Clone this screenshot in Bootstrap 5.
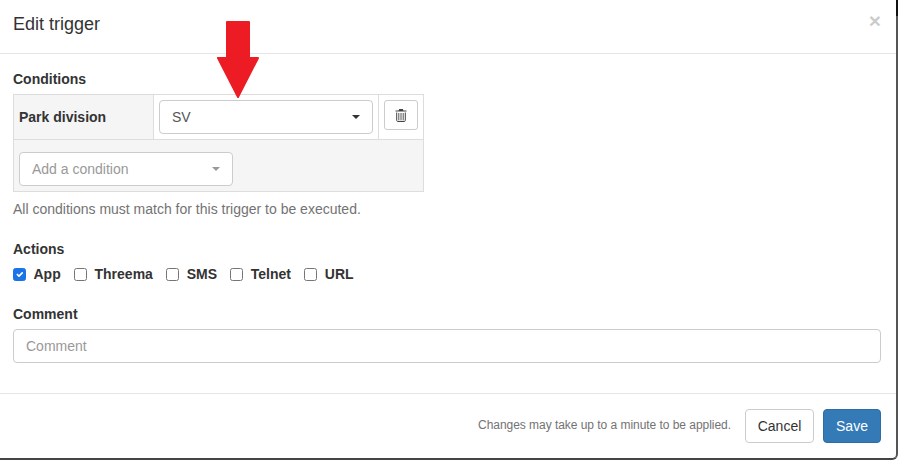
<!DOCTYPE html>
<html lang="en">
<head>
<meta charset="utf-8">
<title>Edit trigger</title>
<link href="https://cdn.jsdelivr.net/npm/bootstrap@5.3.0/dist/css/bootstrap.min.css" rel="stylesheet">
<style>
html, body { height: 460px; overflow: hidden; background: #fff; }
body { font-family: "Liberation Sans", Arial, sans-serif; font-size: 14px; line-height: 20px; color: #333; }
.dlg { width: 898px; height: 460px; background: #fff; border: 0; border-right: 2px solid #555; border-bottom: 2px solid #444; border-radius: 0 0 6px 0; }
.dlg-head { height: 54px; padding: 0 15px 0 13px; border-bottom: 1px solid #e5e5e5; }
.dlg-title { font-size: 18px; line-height: 20px; margin: 0 0 5px; font-weight: 400; color: #333; }
.dlg-x { font-size: 21px; font-weight: 700; line-height: 1; color: #000; opacity: .2; border: 0; background: none; padding: 0; margin: 0 0 12px 0; }
.dlg-body { height: 339px; padding: 15px 15px 0 13px; }
.sec-label { font-weight: 700; line-height: 20px; margin: 0 0 5px; display: block; }
.cond-table { width: 411px; border-collapse: collapse; background: #f5f5f5; margin: 0; }
.cond-table td { border: 1px solid #ddd; padding: 5px; vertical-align: top; }
.cond-name { width: 140px; font-weight: 700; line-height: 34px; padding-top: 5px !important; }
.cond-val { background: #fff; width: 225px; }
.cond-del { background: #fff; }
.sel-box { width: 214px; height: 34px; border: 1px solid #ccc; border-radius: 4px; background: #fff; padding: 0 12px; color: #555; }
.sel-caret { width: 0; height: 0; border-left: 4px solid transparent; border-right: 4px solid transparent; border-top: 4px solid #333; }
.sel-muted { color: #999; margin-top: 7px; margin-bottom: 0; }
.sel-muted .sel-caret { border-top-color: #999; }
.add-cell { height: 52px; }
.del-btn { width: 34px; height: 30px; padding: 0 0 1px; border: 1px solid #ccc; border-radius: 3px; background: #fff; line-height: 1; color: #333; }
.help-line { color: #737373; margin: 7px 0 0; line-height: 20px; }
.actions-block { margin-top: 20px; }
.check-row { height: 20px; margin-top: 0; }
.check-item { font-weight: 700; margin-right: 13.3px; }
.check-item .form-check-input { width: 13px; height: 13px; margin: 0 7.5px 0 0; border: 1px solid #767676; border-radius: 2.5px; flex: none; }
.check-item .form-check-input:checked { background-color: #1a73e8; border-color: #1a73e8; }
.comment-block { margin-top: 20px; }
.comment-input { height: 34px; width: 868px; border: 1px solid #ccc; border-radius: 4px; padding: 6px 12px; font-size: 14px; line-height: 20px; color: #555; }
.comment-input::placeholder { color: #999; opacity: 1; }
.dlg-foot { height: 65px; padding: 15px 15px 0 13px; border-top: 1px solid #e5e5e5; }
.foot-note { font-size: 12px; color: #737373; margin-right: 14px; margin-top: 6px; letter-spacing: -.04px; }
.btn-cancel { width: 69px; height: 34px; padding: 0; font-size: 14px; color: #333; background: #fff; border: 1px solid #ccc; border-radius: 4px; margin-right: 9px; }
.btn-save { width: 58px; height: 34px; padding: 0; font-size: 14px; color: #fff; background: #337ab7; border: 1px solid #2e6da4; border-radius: 4px; }
.red-arrow { position: absolute; left: 216px; top: 20px; width: 44px; height: 80px; pointer-events: none; }
.corner-strip { position: absolute; right: -2px; top: 0; width: 2px; height: 16px; background: #111; }
</style>
</head>
<body>
<div class="dlg position-relative">
  <span class="corner-strip"></span>
  <div class="dlg-head d-flex align-items-center justify-content-between">
    <h4 class="dlg-title">Edit trigger</h4>
    <button type="button" class="dlg-x" aria-label="Close">×</button>
  </div>
  <div class="dlg-body">
    <label class="sec-label">Conditions</label>
    <table class="cond-table">
      <tr>
        <td class="cond-name">Park division</td>
        <td class="cond-val">
          <div class="sel-box d-flex align-items-center justify-content-between"><span>SV</span><span class="sel-caret"></span></div>
        </td>
        <td class="cond-del">
          <button type="button" class="del-btn d-flex align-items-center justify-content-center" aria-label="Delete">
            <svg width="12" height="14" viewBox="0 0 12 14" aria-hidden="true">
              <path d="M4.2 1h3.6l.6 1.4H11.5v1H.5v-1H3.6z" fill="#444"/>
              <path d="M1.7 4.5V12.4c0 .6.4 1.1 1 1.1h6.6c.6 0 1-.5 1-1.1V4.5" fill="none" stroke="#444" stroke-width="1"/>
              <path d="M3.8 5v7.4M6 5v7.4M8.2 5v7.4" fill="none" stroke="#555" stroke-width="1"/>
            </svg>
          </button>
        </td>
      </tr>
      <tr>
        <td colspan="3" class="add-cell">
          <div class="sel-box sel-muted d-flex align-items-center justify-content-between"><span>Add a condition</span><span class="sel-caret"></span></div>
        </td>
      </tr>
    </table>
    <p class="help-line">All conditions must match for this trigger to be executed.</p>
    <div class="actions-block">
      <label class="sec-label">Actions</label>
      <div class="check-row d-flex align-items-center">
        <label class="check-item d-flex align-items-center"><input class="form-check-input" type="checkbox" checked>App</label>
        <label class="check-item d-flex align-items-center"><input class="form-check-input" type="checkbox">Threema</label>
        <label class="check-item d-flex align-items-center"><input class="form-check-input" type="checkbox">SMS</label>
        <label class="check-item d-flex align-items-center"><input class="form-check-input" type="checkbox">Telnet</label>
        <label class="check-item d-flex align-items-center"><input class="form-check-input" type="checkbox">URL</label>
      </div>
    </div>
    <div class="comment-block">
      <label class="sec-label">Comment</label>
      <input class="comment-input d-block" type="text" placeholder="Comment">
    </div>
  </div>
  <div class="dlg-foot d-flex align-items-start justify-content-end">
    <span class="foot-note">Changes may take up to a minute to be applied.</span>
    <button type="button" class="btn btn-cancel">Cancel</button>
    <button type="button" class="btn btn-save">Save</button>
  </div>
  <svg class="red-arrow" viewBox="0 0 44 80" aria-hidden="true">
    <path d="M11 2H33V38H42L22 77L2 38H11Z" fill="#ed1c24" stroke="#ed1c24" stroke-width="2" stroke-linejoin="round"/>
  </svg>
</div>
<script src="https://cdn.jsdelivr.net/npm/bootstrap@5.3.0/dist/js/bootstrap.bundle.min.js"></script>
</body>
</html>
